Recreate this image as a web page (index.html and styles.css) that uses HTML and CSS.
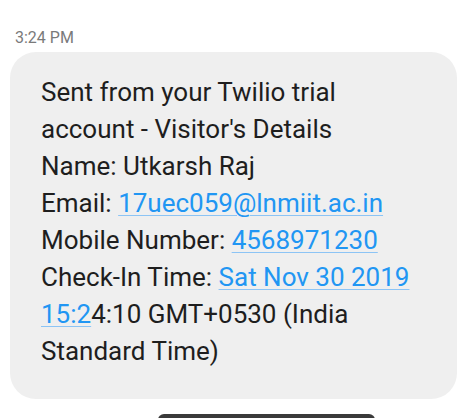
FILE: index.html
```html
<!DOCTYPE html>
<html>
<head>
<meta charset="utf-8">
<link rel="stylesheet" href="styles.css">
</head>
<body>
<div class="screen">
  <div class="time">3:24 PM</div>
  <div class="bubble">
    <p class="msg">Sent from your Twilio trial<br>account - Visitor's Details<br>Name: Utkarsh Raj<br>Email: <a class="link">17uec059@lnmiit.ac.in</a><br>Mobile Number: <a class="link">4568971230</a><br>Check-In Time: <a class="link">Sat Nov 30 2019<br>15:2</a>4:10 GMT+0530 (India<br>Standard Time)</p>
  </div>
  <div class="navbar"></div>
</div>
</body>
</html>
```
FILE: styles.css
```css
html, body {
  margin: 0;
  padding: 0;
  background: #ffffff;
}
.screen {
  width: 473px;
  height: 418px;
  overflow: hidden;
  display: flex;
  flex-direction: column;
  font-family: Roboto, "Noto Sans", sans-serif;
}
.time {
  margin: 30px 0 0 15px;
  font-size: 16px;
  line-height: 16px;
  color: #7a7a7a;
  flex: none;
}
.bubble {
  margin: 6px 0 0 10px;
  width: 447px;
  height: 347px;
  flex: none;
  box-sizing: border-box;
  background: #efefef;
  border-radius: 26px;
  padding: 22px 10px 0 31px;
}
.msg {
  margin: 0;
  font-size: 26px;
  line-height: 37px;
  color: #1e1e1e;
}
.link {
  color: #2196f3;
  text-decoration: underline;
  text-decoration-color: #8cc4f5;
  text-underline-offset: 3px;
  text-decoration-thickness: 1px;
}
.navbar {
  margin: 15px 0 0 158px;
  width: 217px;
  height: 10px;
  flex: none;
  background: #3a3a3a;
  border-radius: 6px 6px 0 0;
}
```
